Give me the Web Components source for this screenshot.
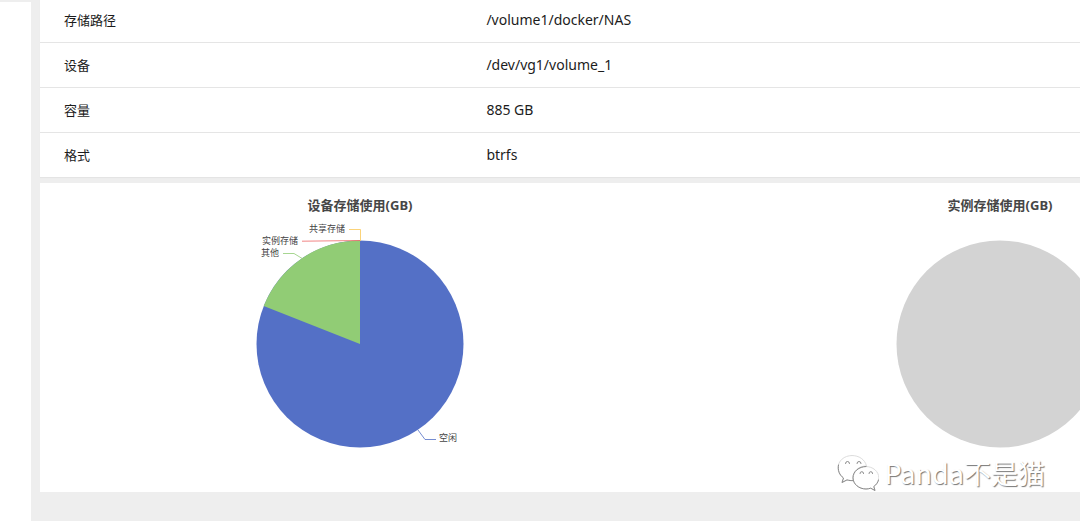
<!DOCTYPE html>
<html lang="zh-CN">
<head>
<meta charset="utf-8">
<title>存储</title>
<style>
html, body { height: 100%; }
body { margin: 0; background: #eee; overflow: hidden; font-family: "Noto Sans", "Noto Sans CJK SC", sans-serif; }
</style>
</head>
<body>
<storage-page></storage-page>
<script>
const define = (name, html, setup) => customElements.define(name, class extends HTMLElement {
  connectedCallback() {
    if (this.shadowRoot) return;
    const template = document.createElement('template');
    template.innerHTML = html;
    this.attachShadow({ mode: 'open' }).append(template.content.cloneNode(true));
    if (setup) setup(this, this.shadowRoot);
  }
});

define('side-panel', `
<style>
:host { display: block; padding-top: 2px; }
div { height: 100%; background: #fff; }
</style>
<div><slot></slot></div>`);

define('volume-info', `
<style>
:host { display: block; background: #fff; box-shadow: 0 1px 1px #e4e4e4; }
table { width: 100%; table-layout: fixed; border-collapse: separate; border-spacing: 0; color: #1c1c1c; }
th, td { box-sizing: border-box; height: 45px; padding: 0 24px; text-align: left; font-size: 14px; line-height: 20px; font-weight: 400; }
th { width: 33%; font-family: "Noto Sans CJK SC", sans-serif; font-size: 13px; }
tr + tr > * { border-top: 1px solid #e5e5e5; }
</style>
<table><tbody></tbody></table>`, (host, root) => {
  const rows = [['存储路径', '/volume1/docker/NAS'], ['设备', '/dev/vg1/volume_1'], ['容量', '885 GB'], ['格式', 'btrfs']];
  const body = root.querySelector('tbody');
  for (const [name, value] of rows) {
    const tr = body.insertRow();
    const th = document.createElement('th');
    th.scope = 'row';
    th.textContent = name;
    tr.append(th);
    tr.insertCell().textContent = value;
  }
});

define('chart-card', `
<style>
:host { display: flex; flex-direction: column; align-items: center; gap: 1px; padding-top: 12px; }
h2 { margin: 0; font-size: 13px; line-height: 20px; font-weight: 700; color: #464646; }
</style>
<h2><slot name="title"></slot></h2>
<slot></slot>`);

define('usage-pie', `
<style>
:host { display: block; }
svg { display: block; width: 240px; height: 276px; overflow: visible; }
text { font-family: "Noto Sans CJK SC", sans-serif; font-size: 9px; fill: #444; }
.line { fill: none; stroke-width: 1; opacity: .8; }
</style>
<svg viewBox="0 0 240 276" role="img" aria-label="设备存储使用">
  <circle cx="120" cy="128" r="103.5" fill="#5470c6"/>
  <path d="M120 128V24.500A103.500 103.500 0 0 0 23.700 90.100Z" fill="#91cc75"/>
  <path class="line" stroke="#fac858" d="M109 13.500H120.500V25"/>
  <path class="line" stroke="#ee6666" d="M62 25.200L120 24.500"/>
  <path class="line" stroke="#91cc75" d="M43 37.500H54L63 43"/>
  <path class="line" stroke="#5470c6" d="M178 214L185 223.500H196"/>
  <text x="105" y="16" text-anchor="end">共享存储</text>
  <text x="58" y="28" text-anchor="end">实例存储</text>
  <text x="39" y="40" text-anchor="end">其他</text>
  <text x="199" y="225">空闲</text>
</svg>`);

define('empty-pie', `
<style>
:host { display: block; }
svg { display: block; width: 240px; height: 276px; }
</style>
<svg viewBox="0 0 240 276" role="img" aria-label="实例存储使用"><circle cx="120" cy="128" r="103.500" fill="#d3d3d3"/></svg>`);

define('chart-row', `
<style>
:host { display: grid; grid-template-columns: 1fr 1fr; background: #fff; }
</style>
<slot></slot>`);

define('author-mark', `
<style>
:host { display: flex; align-items: center; gap: 6px; color: #fff; font: 27px/36px "Noto Sans CJK SC", sans-serif; text-shadow: 1px 1px 1px #777; }
svg { flex: none; width: 42px; height: 38px; }
</style>
<svg viewBox="0 0 42 38" fill="none" stroke="#8a8a8a" stroke-width="1" stroke-linecap="round" aria-hidden="true">
  <path d="M15 1.500C7 1.500 1 7 1 14c0 4 2 7.500 5.500 10L5 28.500l5-2.600c2 .6 4 .8 6.500.7-2-8 4-14.600 13-14.600C28 5.500 22 1.500 15 1.500Z" fill="#fff" stroke="#ddd"/>
  <path d="M1.500 11C.5 16.500 2.500 21 6.500 24L5 28.500l5-2.600c2 .6 4 .8 6.500.7"/>
  <path d="M29 12.500c-7 0-13 5-13 11.300S22 35 29 35c1.600 0 3.200-.3 4.700-.8l4.300 2.300-1.200-4c3.100-2.200 5-5.200 5-8.700 0-6.300-5.800-11.300-12.800-11.300Z" fill="#fff" stroke="#ddd"/>
  <path d="M29 12.500c-7 0-13 5-13 11.300S22 35 29 35c1.600 0 3.200-.3 4.700-.8l4.300 2.300-1.200-4c2.500-1.700 4-4 4.700-6.500"/>
  <path d="M8.500 9.500a2 2 0 0 1 4 0M20 9.500a2 2 0 0 1 4 0M23 19.500a1.800 1.800 0 0 1 3.600 0M32 19.500a1.800 1.800 0 0 1 3.600 0"/>
</svg>
<span><slot></slot></span>`);

define('storage-page', `
<style>
:host { position: relative; display: grid; grid-template-columns: 31px minmax(0, 1fr); height: 100%; overflow: hidden; }
main { display: flex; flex-direction: column; gap: 6px; min-width: 1280px; padding: 0 0 29px 9px; align-self: start; margin-top: -3px; }
author-mark { position: absolute; right: 35px; bottom: 29px; }
</style>
<side-panel></side-panel>
<main>
  <volume-info></volume-info>
  <chart-row>
    <chart-card><span slot="title">设备存储使用(GB)</span><usage-pie></usage-pie></chart-card>
    <chart-card><span slot="title">实例存储使用(GB)</span><empty-pie></empty-pie></chart-card>
  </chart-row>
</main>
<author-mark>Panda不是猫</author-mark>`);
</script>
</body>
</html>
